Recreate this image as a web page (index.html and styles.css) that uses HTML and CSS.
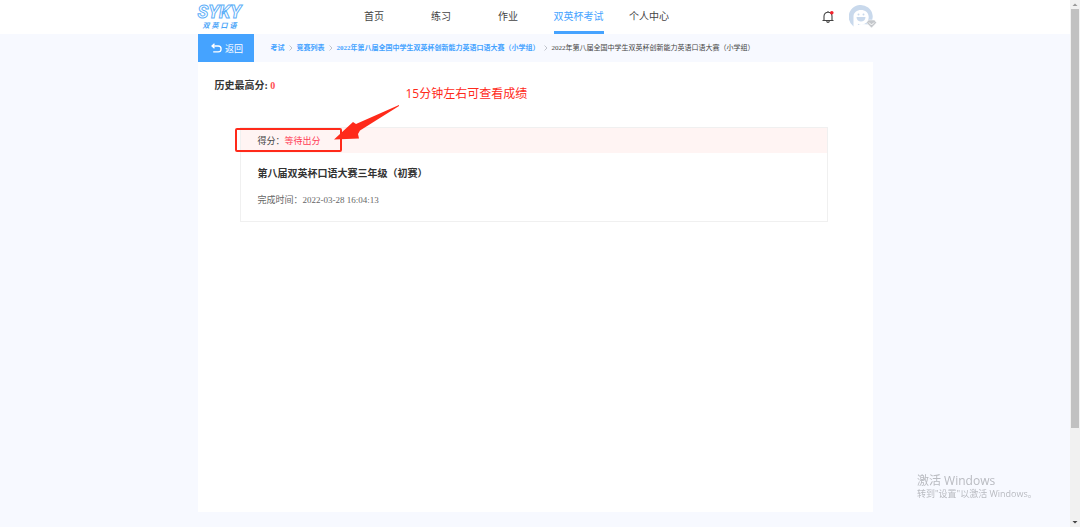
FILE: index.html
```html
<!DOCTYPE html>
<html lang="zh-CN">
<head>
<meta charset="utf-8">
<title>双英口语</title>
<link rel="stylesheet" href="styles.css">
</head>
<body>
<div class="page">
  <header class="topbar">
    <div class="container topbar-inner">
      <a class="logo" href="#">
        <span class="logo-mark">SYKY</span>
        <span class="logo-name"><span>双</span><span>英</span><span>口</span><span>语</span></span>
      </a>
      <nav class="nav">
        <a class="nav-item" href="#"><span>首页</span></a>
        <a class="nav-item" href="#"><span>练习</span></a>
        <a class="nav-item" href="#"><span>作业</span></a>
        <a class="nav-item active" href="#"><span>双英杯考试</span></a>
        <a class="nav-item" href="#"><span>个人中心</span></a>
      </nav>
      <div class="tools">
        <button class="icon-button" aria-label="消息">
          <svg width="14" height="14" viewBox="0 0 14 14" fill="none" stroke="#444" stroke-width="1.1">
            <path d="M1.5 10.5h11M3 10.3V6.3C3 3.9 4.7 2.3 7 2.3s4 1.6 4 4v4M7 2.2V1M5.6 11.2c.3 1.5 2.5 1.5 2.8 0"/>
            <circle cx="10.8" cy="2.8" r="1.8" fill="#f5222d" stroke="none"/>
          </svg>
        </button>
        <button class="icon-button" aria-label="账户">
          <svg width="28" height="26" viewBox="0 0 28 26">
            <path d="M4.500 22.500A12 12 0 1 1 21 20.500L12 20z" fill="#c9d9ec"/>
            <path d="M4.500 25V12.500C4.500 8.500 8 6 12 6s7.700 2.500 7.700 7-3 7.500-7.700 7.500c-1.500 0-2.500-.5-3-.8L8.500 25z" fill="#fff"/>
            <circle cx="9.500" cy="10.500" r="1" fill="#c9d9ec"/><circle cx="14.500" cy="10.500" r="1" fill="#c9d9ec"/>
            <path d="M7.500 13h9c0 6-9 6-9 0z" fill="#c9d9ec"/>
            <path d="M19.500 16h6l2 2.700-5 5.300-5-5.300z" fill="#c4c7cb" stroke="#fff" stroke-width=".5"/>
            <path d="M20 18.500l2.500 2.500 2.500-2.500" fill="none" stroke="#fff"/>
          </svg>
        </button>
      </div>
    </div>
  </header>

  <main class="container">
    <div class="crumb-row">
      <button class="back">
        <svg width="11" height="10" viewBox="0 0 11 10" fill="none" stroke="#fff" stroke-width="1.300">
          <path d="M3.500.7L1 3l2.500 2.300M1 3h6.200a2.900 2.900 0 0 1 0 5.800H2.200"/>
        </svg>
        返回
      </button>
      <nav class="crumbs" aria-label="路径">
        <a href="#">考试</a>
        <svg class="sep" width="4" height="6" viewBox="0 0 4 6"><path d="M.5.5L3 3 .5 5.500"/></svg>
        <a href="#">竞赛列表</a>
        <svg class="sep" width="4" height="6" viewBox="0 0 4 6"><path d="M.5.5L3 3 .5 5.500"/></svg>
        <a href="#">2022年第八届全国中学生双英杯创新能力英语口语大赛（小学组）</a>
        <svg class="sep" width="4" height="6" viewBox="0 0 4 6"><path d="M.5.5L3 3 .5 5.500"/></svg>
        <span>2022年第八届全国中学生双英杯创新能力英语口语大赛（小学组）</span>
      </nav>
    </div>

    <section class="panel">
      <h1 class="best">历史最高分: <span class="best-value">0</span></h1>
      <article class="card">
        <div class="card-head">得分：<span class="pending">等待出分</span></div>
        <div class="card-body">
          <h2 class="card-title">第八届双英杯口语大赛三年级（初赛）</h2>
          <p class="card-time">完成时间：<time>2022-03-28 16:04:13</time></p>
        </div>
        <div class="mark-box"></div>
        <svg class="mark-arrow" width="68" height="38" viewBox="0 0 68 38"><path d="M66 1L23 20 20 18 1 35.500 26 34.500 25 30 27 26.500 66 2z" fill="#ff2a1a"/></svg>
        <p class="mark-text">15分钟左右可查看成绩</p>
      </article>
    </section>
  </main>
</div>

<div class="scrollbar" aria-hidden="true">
  <svg width="10" height="9" viewBox="0 0 10 9"><path d="M2.500 6L5 3.500 7.500 6z" fill="#999"/></svg>
  <div class="track"><div class="thumb"></div></div>
  <svg width="10" height="9" viewBox="0 0 10 9"><path d="M2.500 3L5 5.500 7.500 3z" fill="#444"/></svg>
</div>

<aside class="activation">
  <p class="activation-title">激活 Windows</p>
  <p class="activation-text">转到"设置"以激活 Windows。</p>
</aside>
</body>
</html>
```
FILE: styles.css
```css
* { box-sizing: border-box; }

body {
  margin: 0;
  height: 100vh;
  display: flex;
  overflow: hidden;
  background: #f7f9ff;
  color: #444;
  font-family: "Liberation Serif", "Noto Sans CJK SC", serif;
  font-size: 10px;
}

h1, h2, p { margin: 0; }
a { color: inherit; text-decoration: none; }
button { border: 0; padding: 0; background: none; font: inherit; cursor: pointer; }
svg { display: block; flex: none; }

.page { flex: 1; display: flex; flex-direction: column; padding-bottom: 15px; }
.container { width: 100%; max-width: 675px; margin: 0 auto; }

.topbar { background: #fff; }
.topbar-inner { height: 34px; display: flex; align-items: stretch; }

.logo { width: 143px; padding-top: 3px; color: #4aa5f8; }
.logo-mark {
  display: block;
  font: italic bold 18px/18px Roboto, sans-serif;
  color: #fff;
  -webkit-text-stroke: 1px #5fb0f8;
}
.logo-name {
  display: flex;
  justify-content: space-between;
  width: 34px;
  margin-left: 5px;
  font: italic bold 7px/8px "Noto Sans CJK SC", sans-serif;
}

.nav { display: flex; font-family: "Noto Sans CJK SC", sans-serif; }
.nav-item { min-width: 67px; padding: 0 12px; display: flex; justify-content: center; }
.nav-item span { padding-top: 1px; line-height: 30px; border-bottom: 3px solid transparent; }
.nav-item.active { color: #45a3ff; }
.nav-item.active span { border-color: #45a3ff; }

.tools { margin-left: auto; display: flex; align-items: center; gap: 14px; margin-right: -4px; }

.crumb-row { display: flex; align-items: stretch; height: 28px; }
.back {
  width: 56px;
  padding-left: 3px;
  display: flex;
  align-items: center;
  justify-content: center;
  gap: 3px;
  background: #45a3ff;
  color: #fff;
  font: 9px "Noto Sans CJK SC", sans-serif;
}
.crumbs { display: flex; align-items: center; gap: 4px; padding-left: 17px; font-size: 7px; line-height: 10px; white-space: nowrap; }
.crumbs a { color: #45a3ff; font-weight: bold; }
.sep { fill: none; stroke: #c0c4cc; stroke-width: 1; }

main { flex: 1; display: flex; flex-direction: column; }
.panel { flex: 1; background: #fff; padding: 16px 45px 0 42px; }
.best { margin-left: -25px; font: bold 10px/16px "Liberation Serif", "Noto Sans CJK SC", serif; color: #333; }
.best-value { color: #ff4d4f; }

.card { position: relative; margin-top: 33px; border: 1px solid #f0f0f0; }
.card-head { padding: 1px 17px 0; line-height: 24px; font-size: 9px; background: #fff4f3; }
.pending { color: #ff3b55; }
.card-body { padding: 13px 17px 13px; }
.card-title { font-size: 10px; line-height: 16px; color: #333; }
.card-time { margin-top: 11px; font-size: 9px; line-height: 15px; color: #666; }

.mark-box { position: absolute; left: -6px; top: 0; width: 107px; height: 24px; border: 2px solid #ff2a1a; border-radius: 2px; }
.mark-arrow { position: absolute; left: 92px; top: -24px; }
.mark-text { position: absolute; left: 165px; top: -43px; font: 12px/18px "Open Sans", "Noto Sans CJK SC", sans-serif; color: #ff2a1a; white-space: nowrap; }

.scrollbar { width: 10px; display: flex; flex-direction: column; background: #f1f1f1; }
.track { flex: 1; padding: 0 1px; }
.thumb { height: 82.4%; background: #c1c1c1; }

.activation { position: fixed; right: 50px; bottom: 27px; width: 113px; font-family: "Open Sans", "Noto Sans CJK SC", sans-serif; color: #b9bbc1; white-space: nowrap; }
.activation-title { font-size: 12px; line-height: 15px; }
.activation-text { font-size: 9px; line-height: 12px; }
```
